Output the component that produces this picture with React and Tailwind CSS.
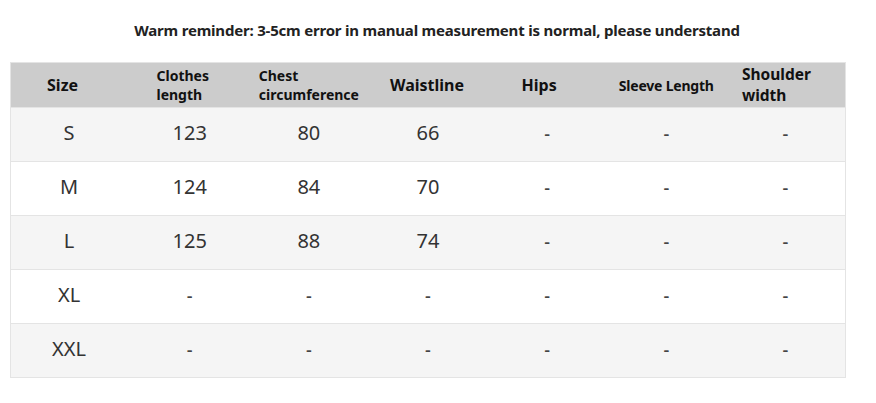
import React from "react";

const headers = [
  { label: ["Size"], cls: "text-[16px] leading-[19px] -ml-[16px]" },
  { label: ["Clothes", "length"], cls: "text-[14px] leading-[19px] -ml-[14px]" },
  { label: ["Chest", "circumference"], cls: "text-[14px] leading-[19px]" },
  { label: ["Waistline"], cls: "text-[16px] leading-[19px] -ml-[2px]" },
  { label: ["Hips"], cls: "text-[16px] leading-[19px] -ml-[16px]" },
  { label: ["Sleeve Length"], cls: "text-[14px] leading-[17px] tracking-[-0.2px]" },
  { label: ["Shoulder", "width"], cls: "text-[15.5px] leading-[21px] -ml-[18px]" },
];

const rows = [
  ["S", "123", "80", "66", "-", "-", "-"],
  ["M", "124", "84", "70", "-", "-", "-"],
  ["L", "125", "88", "74", "-", "-", "-"],
  ["XL", "-", "-", "-", "-", "-", "-"],
  ["XXL", "-", "-", "-", "-", "-", "-"],
];

function App() {
  return (
    <div
      className="w-[876px] h-[403px] bg-white pt-[19px]"
      style={{ fontFamily: '"Noto Sans", "Open Sans", sans-serif' }}
    >
      <div className="h-[22px] flex items-center justify-center text-[15px] font-bold text-[#222] tracking-[-0.2px] ml-[-2px]">
        Warm reminder: 3-5cm error in manual measurement is normal, please understand
      </div>
      <div className="ml-[10px] mt-[21px] w-[836px] border border-[#e4e4e4]">
        <div className="grid grid-cols-7 h-[44px] bg-[#cccccc]">
          {headers.map((h, i) => (
            <div key={i} className="flex items-center justify-center">
              <div className={`font-bold text-[#111] text-left ${h.cls}`}>
                {h.label.map((l) => (
                  <div key={l}>{l}</div>
                ))}
              </div>
            </div>
          ))}
        </div>
        {rows.map((r, ri) => (
          <div
            key={ri}
            className={`grid grid-cols-7 h-[54px] border-t border-[#e4e4e4] ${
              ri % 2 === 0 ? "bg-[#f5f5f5]" : "bg-white"
            }`}
          >
            {r.map((c, ci) => (
              <div
                key={ci}
                className={`flex items-center justify-center text-[20px] text-[#333] pb-[3px] ${
                  ci === 0 ? "-ml-[3px]" : ""
                }`}
              >
                {c === "-" ? (
                  <span className="text-[18px] font-medium text-[#444]">-</span>
                ) : (
                  c
                )}
              </div>
            ))}
          </div>
        ))}
      </div>
    </div>
  );
}

export default App;
